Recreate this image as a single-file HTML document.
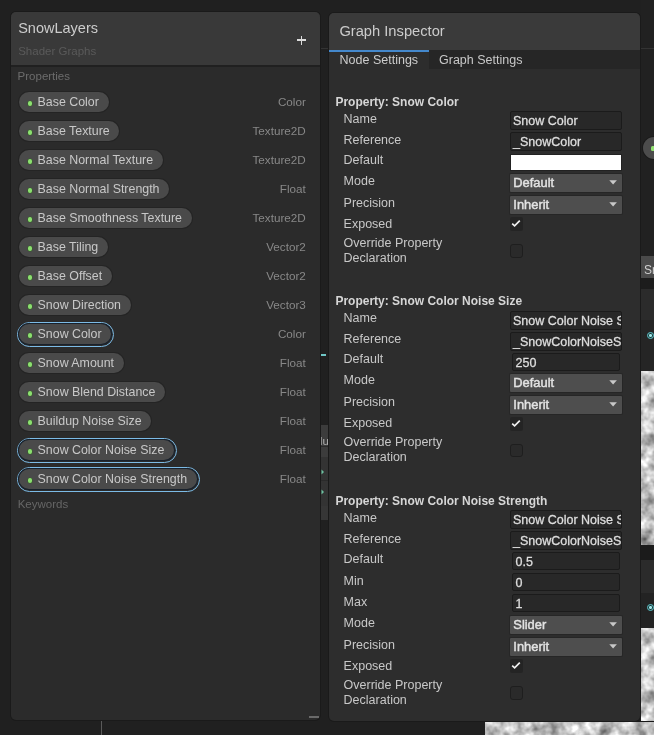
<!DOCTYPE html>
<html><head><meta charset="utf-8"><style>
html,body{margin:0;padding:0;}
body{width:654px;height:735px;overflow:hidden;position:relative;background:#202020;font-family:"Liberation Sans", sans-serif;}
#root{position:absolute;left:0;top:0;width:654px;height:735px;will-change:transform;}
.b{position:absolute;}
.t{position:absolute;white-space:nowrap;line-height:1;}
</style></head><body>
<svg width="0" height="0" style="position:absolute"><defs>
<filter id="noise" x="0" y="0" width="1" height="1" filterUnits="objectBoundingBox" color-interpolation-filters="sRGB">
<feTurbulence type="fractalNoise" baseFrequency="0.08" numOctaves="3" seed="7"/>
<feColorMatrix type="matrix" values="0.95 0 0 0 0.27  0.95 0 0 0 0.27  0.95 0 0 0 0.27  0 0 0 0 1"/>
</filter></defs></svg>
<div id="root"><div class="b" style="left:641px;top:0px;width:13px;height:735px;background:#212121;"></div><div class="b" style="left:641px;top:47.5px;width:13px;height:1px;background:#333333;"></div><div class="b" style="left:320px;top:47.5px;width:9px;height:1px;background:#333333;"></div><div class="b" style="left:643px;top:137px;width:24px;height:22px;background:#4c4c4c;border-radius:11px;box-shadow:0 0 0 1px #1a1a1a;"></div><div class="b" style="left:650.5px;top:146px;width:6px;height:5px;background:#90e070;border-radius:1.5px;"></div><div class="b" style="left:641px;top:255.5px;width:13px;height:22.5px;background:#4a4a4a;"></div><div class="t" style="left:644px;top:263.74px;font-size:12px;color:#d0d0d0;">Sn</div><div class="b" style="left:641px;top:278px;width:13px;height:11px;background:#1c1c1c;"></div><div class="b" style="left:641px;top:289px;width:13px;height:31px;background:#2b2b2b;"></div><div class="b" style="left:641px;top:320px;width:13px;height:51px;background:#252525;"></div><div class="b" style="left:646.5px;top:332px;width:7px;height:7px;border:1.5px solid #5cc6cc;border-radius:50%;box-sizing:border-box;background:radial-gradient(circle,#9fe8ea 0 1.3px,#203838 1.6px);"></div><svg class="b" style="left:641px;top:371px" width="13" height="174"><rect width="13" height="174" filter="url(#noise)"/></svg><div class="b" style="left:641px;top:545px;width:13px;height:15px;background:#1b1b1b;"></div><div class="b" style="left:641px;top:560px;width:13px;height:33px;background:#2b2b2b;"></div><div class="b" style="left:641px;top:593px;width:13px;height:34.5px;background:#232323;"></div><div class="b" style="left:646.5px;top:604px;width:7px;height:7px;border:1.5px solid #5cc6cc;border-radius:50%;box-sizing:border-box;background:radial-gradient(circle,#9fe8ea 0 1.3px,#203838 1.6px);"></div><svg class="b" style="left:641px;top:627.5px" width="13" height="108"><rect width="13" height="108" filter="url(#noise)"/></svg><svg class="b" style="left:485px;top:722px" width="169" height="13"><rect width="169" height="13" filter="url(#noise)"/></svg><div class="b" style="left:485px;top:721px;width:169px;height:1px;background:#181818;"></div><div class="b" style="left:100.5px;top:720px;width:1px;height:15px;background:#5a5a5a;"></div><div class="b" style="left:320px;top:354px;width:6px;height:1.5px;background:#6fc6c6;"></div><div class="b" style="left:320px;top:425px;width:9px;height:32px;background:#3c3c3c;"></div><div class="b" style="left:320px;top:457px;width:9px;height:49px;background:#333333;"></div><div class="b" style="left:320px;top:506px;width:9px;height:14px;background:#363636;"></div><div class="b" style="left:320px;top:446px;width:9px;height:0.8px;background:#2a2a2a;"></div><div class="b" style="left:320px;top:480px;width:9px;height:0.8px;background:#2a2a2a;"></div><div class="t" style="left:313px;top:435.67px;font-size:11.5px;color:#b0b0b0;">Mu</div><svg class="b" style="left:320.5px;top:469px" width="4" height="6"><path d="M0.5 0.5 L3 3 L0.5 5.5Z" fill="#6cc0a0"/></svg><svg class="b" style="left:320.5px;top:489px" width="4" height="6"><path d="M0.5 0.5 L3 3 L0.5 5.5Z" fill="#6cc0a0"/></svg><div class="b" style="left:10px;top:11px;width:311px;height:710px;background:#1a1a1a;border-radius:6px;"></div><div class="b" style="left:11px;top:12px;width:309px;height:708px;background:#2b2b2b;border-radius:5px;overflow:hidden;"><div class="b" style="left:0;top:0;width:309px;height:53px;background:#393939;"></div><div class="b" style="left:0;top:53px;width:309px;height:1.5px;background:#202020;"></div></div><div class="t" style="left:18.2px;top:21.03px;font-size:14.5px;color:#cccccc;">SnowLayers</div><div class="t" style="left:18.2px;top:45.57px;font-size:11.5px;color:#5a5a5a;">Shader Graphs</div><div class="b" style="left:296.8px;top:39.4px;width:9.5px;height:1.5px;background:#dcdcdc;"></div><div class="b" style="left:300.8px;top:35.5px;width:1.5px;height:9.5px;background:#dcdcdc;"></div><div class="t" style="left:17.6px;top:70.97px;font-size:11.5px;color:#6c6c6c;">Properties</div><div class="b" style="left:19.2px;top:92px;width:89.396875px;height:20px;background:#4a4a4a;border-radius:10px;box-shadow:0 0 0 1px #242424;"></div><div class="b" style="left:27.5px;top:101px;width:4.5px;height:4.5px;background:#8ce070;border-radius:50%;box-shadow:0 0 0 0.6px #3a5a30;"></div><div class="t" style="left:37.6px;top:96.40px;font-size:12.4px;color:#c8c8c8;">Base Color</div><div class="t" style="right:348.2px;top:96.10px;font-size:11.7px;color:#888888;">Color</div><div class="b" style="left:19.2px;top:121px;width:100.19375px;height:20px;background:#4a4a4a;border-radius:10px;box-shadow:0 0 0 1px #242424;"></div><div class="b" style="left:27.5px;top:130px;width:4.5px;height:4.5px;background:#8ce070;border-radius:50%;box-shadow:0 0 0 0.6px #3a5a30;"></div><div class="t" style="left:37.6px;top:125.40px;font-size:12.4px;color:#c8c8c8;">Base Texture</div><div class="t" style="right:348.2px;top:125.10px;font-size:11.7px;color:#888888;">Texture2D</div><div class="b" style="left:19.2px;top:150px;width:143.56875000000002px;height:20px;background:#4a4a4a;border-radius:10px;box-shadow:0 0 0 1px #242424;"></div><div class="b" style="left:27.5px;top:159px;width:4.5px;height:4.5px;background:#8ce070;border-radius:50%;box-shadow:0 0 0 0.6px #3a5a30;"></div><div class="t" style="left:37.6px;top:154.40px;font-size:12.4px;color:#c8c8c8;">Base Normal Texture</div><div class="t" style="right:348.2px;top:154.10px;font-size:11.7px;color:#888888;">Texture2D</div><div class="b" style="left:19.2px;top:179px;width:149.99062500000002px;height:20px;background:#4a4a4a;border-radius:10px;box-shadow:0 0 0 1px #242424;"></div><div class="b" style="left:27.5px;top:188px;width:4.5px;height:4.5px;background:#8ce070;border-radius:50%;box-shadow:0 0 0 0.6px #3a5a30;"></div><div class="t" style="left:37.6px;top:183.40px;font-size:12.4px;color:#c8c8c8;">Base Normal Strength</div><div class="t" style="right:348.2px;top:183.10px;font-size:11.7px;color:#888888;">Float</div><div class="b" style="left:19.2px;top:208px;width:172.52187500000002px;height:20px;background:#4a4a4a;border-radius:10px;box-shadow:0 0 0 1px #242424;"></div><div class="b" style="left:27.5px;top:217px;width:4.5px;height:4.5px;background:#8ce070;border-radius:50%;box-shadow:0 0 0 0.6px #3a5a30;"></div><div class="t" style="left:37.6px;top:212.40px;font-size:12.4px;color:#c8c8c8;">Base Smoothness Texture</div><div class="t" style="right:348.2px;top:212.10px;font-size:11.7px;color:#888888;">Texture2D</div><div class="b" style="left:19.2px;top:237px;width:88.709375px;height:20px;background:#4a4a4a;border-radius:10px;box-shadow:0 0 0 1px #242424;"></div><div class="b" style="left:27.5px;top:246px;width:4.5px;height:4.5px;background:#8ce070;border-radius:50%;box-shadow:0 0 0 0.6px #3a5a30;"></div><div class="t" style="left:37.6px;top:241.40px;font-size:12.4px;color:#c8c8c8;">Base Tiling</div><div class="t" style="right:348.2px;top:241.10px;font-size:11.7px;color:#888888;">Vector2</div><div class="b" style="left:19.2px;top:266px;width:92.615625px;height:20px;background:#4a4a4a;border-radius:10px;box-shadow:0 0 0 1px #242424;"></div><div class="b" style="left:27.5px;top:275px;width:4.5px;height:4.5px;background:#8ce070;border-radius:50%;box-shadow:0 0 0 0.6px #3a5a30;"></div><div class="t" style="left:37.6px;top:270.40px;font-size:12.4px;color:#c8c8c8;">Base Offset</div><div class="t" style="right:348.2px;top:270.10px;font-size:11.7px;color:#888888;">Vector2</div><div class="b" style="left:19.2px;top:295px;width:111.428125px;height:20px;background:#4a4a4a;border-radius:10px;box-shadow:0 0 0 1px #242424;"></div><div class="b" style="left:27.5px;top:304px;width:4.5px;height:4.5px;background:#8ce070;border-radius:50%;box-shadow:0 0 0 0.6px #3a5a30;"></div><div class="t" style="left:37.6px;top:299.40px;font-size:12.4px;color:#c8c8c8;">Snow Direction</div><div class="t" style="right:348.2px;top:299.10px;font-size:11.7px;color:#888888;">Vector3</div><div class="b" style="left:17px;top:321.7px;width:97.146875px;height:25.2px;border:1.5px solid #7cbbe6;border-radius:12.4px;box-sizing:border-box;"></div><div class="b" style="left:19.2px;top:324px;width:92.146875px;height:20px;background:#4a4a4a;border-radius:10px;box-shadow:0 0 0 1px #18212c;"></div><div class="b" style="left:27.5px;top:333px;width:4.5px;height:4.5px;background:#8ce070;border-radius:50%;box-shadow:0 0 0 0.6px #3a5a30;"></div><div class="t" style="left:37.6px;top:328.40px;font-size:12.4px;color:#c8c8c8;">Snow Color</div><div class="t" style="right:348.2px;top:328.10px;font-size:11.7px;color:#888888;">Color</div><div class="b" style="left:19.2px;top:353px;width:104.553125px;height:20px;background:#4a4a4a;border-radius:10px;box-shadow:0 0 0 1px #242424;"></div><div class="b" style="left:27.5px;top:362px;width:4.5px;height:4.5px;background:#8ce070;border-radius:50%;box-shadow:0 0 0 0.6px #3a5a30;"></div><div class="t" style="left:37.6px;top:357.40px;font-size:12.4px;color:#c8c8c8;">Snow Amount</div><div class="t" style="right:348.2px;top:357.10px;font-size:11.7px;color:#888888;">Float</div><div class="b" style="left:19.2px;top:382px;width:145.88125000000002px;height:20px;background:#4a4a4a;border-radius:10px;box-shadow:0 0 0 1px #242424;"></div><div class="b" style="left:27.5px;top:391px;width:4.5px;height:4.5px;background:#8ce070;border-radius:50%;box-shadow:0 0 0 0.6px #3a5a30;"></div><div class="t" style="left:37.6px;top:386.40px;font-size:12.4px;color:#c8c8c8;">Snow Blend Distance</div><div class="t" style="right:348.2px;top:386.10px;font-size:11.7px;color:#888888;">Float</div><div class="b" style="left:19.2px;top:411px;width:132.1px;height:20px;background:#4a4a4a;border-radius:10px;box-shadow:0 0 0 1px #242424;"></div><div class="b" style="left:27.5px;top:420px;width:4.5px;height:4.5px;background:#8ce070;border-radius:50%;box-shadow:0 0 0 0.6px #3a5a30;"></div><div class="t" style="left:37.6px;top:415.40px;font-size:12.4px;color:#c8c8c8;">Buildup Noise Size</div><div class="t" style="right:348.2px;top:415.10px;font-size:11.7px;color:#888888;">Float</div><div class="b" style="left:17px;top:437.7px;width:159.81875000000002px;height:25.2px;border:1.5px solid #7cbbe6;border-radius:12.4px;box-sizing:border-box;"></div><div class="b" style="left:19.2px;top:440px;width:154.81875000000002px;height:20px;background:#4a4a4a;border-radius:10px;box-shadow:0 0 0 1px #18212c;"></div><div class="b" style="left:27.5px;top:449px;width:4.5px;height:4.5px;background:#8ce070;border-radius:50%;box-shadow:0 0 0 0.6px #3a5a30;"></div><div class="t" style="left:37.6px;top:444.40px;font-size:12.4px;color:#c8c8c8;">Snow Color Noise Size</div><div class="t" style="right:348.2px;top:444.10px;font-size:11.7px;color:#888888;">Float</div><div class="b" style="left:17px;top:466.7px;width:182.53750000000002px;height:25.2px;border:1.5px solid #7cbbe6;border-radius:12.4px;box-sizing:border-box;"></div><div class="b" style="left:19.2px;top:469px;width:177.53750000000002px;height:20px;background:#4a4a4a;border-radius:10px;box-shadow:0 0 0 1px #18212c;"></div><div class="b" style="left:27.5px;top:478px;width:4.5px;height:4.5px;background:#8ce070;border-radius:50%;box-shadow:0 0 0 0.6px #3a5a30;"></div><div class="t" style="left:37.6px;top:473.40px;font-size:12.4px;color:#c8c8c8;">Snow Color Noise Strength</div><div class="t" style="right:348.2px;top:473.10px;font-size:11.7px;color:#888888;">Float</div><div class="t" style="left:17.7px;top:499.17px;font-size:11.5px;color:#666666;">Keywords</div><div class="b" style="left:309px;top:716px;width:10px;height:2px;background:#6a6a6a;"></div><div class="b" style="left:328px;top:12px;width:313px;height:710px;background:#1a1a1a;border-radius:6px;"></div><div class="b" style="left:329px;top:13px;width:311px;height:708px;background:#2d2d2d;border-radius:5px;overflow:hidden;"><div class="b" style="left:0;top:0;width:311px;height:37px;background:#3a3a3a;"></div><div class="b" style="left:100px;top:37px;width:211px;height:18.5px;background:#262626;"></div><div class="b" style="left:0;top:37px;width:100px;height:1.5px;background:#4488cc;"></div></div><div class="t" style="left:339.4px;top:24.46px;font-size:14.7px;color:#cccccc;">Graph Inspector</div><div class="t" style="left:339.6px;top:54.02px;font-size:12.5px;color:#cccccc;">Node Settings</div><div class="t" style="left:439px;top:54.02px;font-size:12.5px;color:#c8c8c8;">Graph Settings</div><div class="t" style="left:335.4px;top:96.24px;font-size:12px;color:#d6d6d6;font-weight:bold;">Property: Snow Color</div><div class="t" style="left:343.6px;top:113.32px;font-size:12.5px;color:#c8c8c8;">Name</div><div class="b" style="left:510px;top:111px;width:112px;height:19px;background:#282828;border:1px solid #1b1b1b;box-sizing:border-box;border-radius:2px;overflow:hidden;"><div class="t" style="left:2px;top:2.92px;font-size:12.5px;-webkit-text-stroke:0.3px #dedede;color:#dedede;white-space:nowrap;">Snow Color</div></div><div class="t" style="left:343.6px;top:134.32px;font-size:12.5px;color:#c8c8c8;">Reference</div><div class="b" style="left:510px;top:132px;width:112px;height:19px;background:#282828;border:1px solid #1b1b1b;box-sizing:border-box;border-radius:2px;overflow:hidden;"><div class="t" style="left:2px;top:2.92px;font-size:12.5px;-webkit-text-stroke:0.3px #dedede;color:#dedede;white-space:nowrap;">_SnowColor</div></div><div class="t" style="left:343.6px;top:153.72px;font-size:12.5px;color:#c8c8c8;">Default</div><div class="b" style="left:510px;top:153.5px;width:112px;height:17px;background:#ffffff;border:1px solid #222;box-sizing:border-box;"></div><div class="t" style="left:343.6px;top:175.32px;font-size:12.5px;color:#c8c8c8;">Mode</div><div class="b" style="left:510px;top:174px;width:112px;height:18px;background:#4e4e4e;border-radius:1px;box-shadow:0 0 0 1px #262626;"></div><div class="t" style="left:513.3px;top:176.88px;font-size:12.9px;color:#e2e2e2;-webkit-text-stroke:0.45px #e2e2e2;">Default</div><svg class="b" style="left:608.5px;top:180px" width="9" height="6"><path d="M0.3 0.3 L7.9 0.3 L4.1 4.6 Z" fill="#c8c8c8"/></svg><div class="t" style="left:343.6px;top:197.32px;font-size:12.5px;color:#c8c8c8;">Precision</div><div class="b" style="left:510px;top:196px;width:112px;height:18px;background:#4e4e4e;border-radius:1px;box-shadow:0 0 0 1px #262626;"></div><div class="t" style="left:513.3px;top:198.88px;font-size:12.9px;color:#e2e2e2;-webkit-text-stroke:0.45px #e2e2e2;">Inherit</div><svg class="b" style="left:608.5px;top:202px" width="9" height="6"><path d="M0.3 0.3 L7.9 0.3 L4.1 4.6 Z" fill="#c8c8c8"/></svg><div class="t" style="left:343.6px;top:218.32px;font-size:12.5px;color:#c8c8c8;">Exposed</div><div class="b" style="left:510px;top:217px;width:12.5px;height:14px;background:#242424;border-radius:2px;"></div><svg class="b" style="left:510px;top:217px" width="13" height="13"><path d="M2.2 6.6 L4.6 8.8 L9.8 3.6" stroke="#efefef" stroke-width="1.7" fill="none"/></svg><div class="t" style="left:343.6px;top:236.82px;font-size:12.5px;color:#c8c8c8;">Override Property</div><div class="t" style="left:343.6px;top:251.82px;font-size:12.5px;color:#c8c8c8;">Declaration</div><div class="b" style="left:509.5px;top:244px;width:13px;height:13.5px;background:#2a2a2a;border:1px solid #1e1e1e;box-sizing:border-box;border-radius:3px;"></div><div class="t" style="left:335.4px;top:295.24px;font-size:12px;color:#d6d6d6;font-weight:bold;">Property: Snow Color Noise Size</div><div class="t" style="left:343.6px;top:312.32px;font-size:12.5px;color:#c8c8c8;">Name</div><div class="b" style="left:510px;top:310.8px;width:112px;height:19px;background:#282828;border:1px solid #1b1b1b;box-sizing:border-box;border-radius:2px;overflow:hidden;"><div class="t" style="left:2px;top:2.92px;font-size:12.5px;-webkit-text-stroke:0.3px #dedede;color:#dedede;white-space:nowrap;">Snow Color Noise Size</div></div><div class="t" style="left:343.6px;top:333.32px;font-size:12.5px;color:#c8c8c8;">Reference</div><div class="b" style="left:510px;top:331.8px;width:112px;height:19px;background:#282828;border:1px solid #1b1b1b;box-sizing:border-box;border-radius:2px;overflow:hidden;"><div class="t" style="left:2px;top:2.92px;font-size:12.5px;-webkit-text-stroke:0.3px #dedede;color:#dedede;white-space:nowrap;">_SnowColorNoiseSize</div></div><div class="t" style="left:343.6px;top:352.72px;font-size:12.5px;color:#c8c8c8;">Default</div><div class="b" style="left:511.5px;top:352.8px;width:108.5px;height:18px;background:#282828;border:1px solid #1b1b1b;box-sizing:border-box;border-radius:2px;overflow:hidden;"><div class="t" style="left:3px;top:2.92px;font-size:12.5px;-webkit-text-stroke:0.3px #dedede;color:#dedede;white-space:nowrap;">250</div></div><div class="t" style="left:343.6px;top:374.32px;font-size:12.5px;color:#c8c8c8;">Mode</div><div class="b" style="left:510px;top:373.8px;width:112px;height:18px;background:#4e4e4e;border-radius:1px;box-shadow:0 0 0 1px #262626;"></div><div class="t" style="left:513.3px;top:376.68px;font-size:12.9px;color:#e2e2e2;-webkit-text-stroke:0.45px #e2e2e2;">Default</div><svg class="b" style="left:608.5px;top:379.8px" width="9" height="6"><path d="M0.3 0.3 L7.9 0.3 L4.1 4.6 Z" fill="#c8c8c8"/></svg><div class="t" style="left:343.6px;top:396.32px;font-size:12.5px;color:#c8c8c8;">Precision</div><div class="b" style="left:510px;top:395.8px;width:112px;height:18px;background:#4e4e4e;border-radius:1px;box-shadow:0 0 0 1px #262626;"></div><div class="t" style="left:513.3px;top:398.68px;font-size:12.9px;color:#e2e2e2;-webkit-text-stroke:0.45px #e2e2e2;">Inherit</div><svg class="b" style="left:608.5px;top:401.8px" width="9" height="6"><path d="M0.3 0.3 L7.9 0.3 L4.1 4.6 Z" fill="#c8c8c8"/></svg><div class="t" style="left:343.6px;top:417.32px;font-size:12.5px;color:#c8c8c8;">Exposed</div><div class="b" style="left:510px;top:416.8px;width:12.5px;height:14px;background:#242424;border-radius:2px;"></div><svg class="b" style="left:510px;top:416.8px" width="13" height="13"><path d="M2.2 6.6 L4.6 8.8 L9.8 3.6" stroke="#efefef" stroke-width="1.7" fill="none"/></svg><div class="t" style="left:343.6px;top:435.82px;font-size:12.5px;color:#c8c8c8;">Override Property</div><div class="t" style="left:343.6px;top:450.82px;font-size:12.5px;color:#c8c8c8;">Declaration</div><div class="b" style="left:509.5px;top:443.8px;width:13px;height:13.5px;background:#2a2a2a;border:1px solid #1e1e1e;box-sizing:border-box;border-radius:3px;"></div><div class="t" style="left:335.4px;top:495.24px;font-size:12px;color:#d6d6d6;font-weight:bold;">Property: Snow Color Noise Strength</div><div class="t" style="left:343.6px;top:512.32px;font-size:12.5px;color:#c8c8c8;">Name</div><div class="b" style="left:510px;top:510px;width:112px;height:19px;background:#282828;border:1px solid #1b1b1b;box-sizing:border-box;border-radius:2px;overflow:hidden;"><div class="t" style="left:2px;top:2.92px;font-size:12.5px;-webkit-text-stroke:0.3px #dedede;color:#dedede;white-space:nowrap;">Snow Color Noise Strength</div></div><div class="t" style="left:343.6px;top:533.32px;font-size:12.5px;color:#c8c8c8;">Reference</div><div class="b" style="left:510px;top:531px;width:112px;height:19px;background:#282828;border:1px solid #1b1b1b;box-sizing:border-box;border-radius:2px;overflow:hidden;"><div class="t" style="left:2px;top:2.92px;font-size:12.5px;-webkit-text-stroke:0.3px #dedede;color:#dedede;white-space:nowrap;">_SnowColorNoiseStrength</div></div><div class="t" style="left:343.6px;top:552.72px;font-size:12.5px;color:#c8c8c8;">Default</div><div class="b" style="left:511.5px;top:552px;width:108.5px;height:18px;background:#282828;border:1px solid #1b1b1b;box-sizing:border-box;border-radius:2px;overflow:hidden;"><div class="t" style="left:3px;top:2.92px;font-size:12.5px;-webkit-text-stroke:0.3px #dedede;color:#dedede;white-space:nowrap;">0.5</div></div><div class="t" style="left:343.6px;top:574.52px;font-size:12.5px;color:#c8c8c8;">Min</div><div class="b" style="left:511.5px;top:573px;width:108.5px;height:18px;background:#282828;border:1px solid #1b1b1b;box-sizing:border-box;border-radius:2px;overflow:hidden;"><div class="t" style="left:3px;top:2.92px;font-size:12.5px;-webkit-text-stroke:0.3px #dedede;color:#dedede;white-space:nowrap;">0</div></div><div class="t" style="left:343.6px;top:595.52px;font-size:12.5px;color:#c8c8c8;">Max</div><div class="b" style="left:511.5px;top:594px;width:108.5px;height:18px;background:#282828;border:1px solid #1b1b1b;box-sizing:border-box;border-radius:2px;overflow:hidden;"><div class="t" style="left:3px;top:2.92px;font-size:12.5px;-webkit-text-stroke:0.3px #dedede;color:#dedede;white-space:nowrap;">1</div></div><div class="t" style="left:343.6px;top:617.32px;font-size:12.5px;color:#c8c8c8;">Mode</div><div class="b" style="left:510px;top:616px;width:112px;height:18px;background:#4e4e4e;border-radius:1px;box-shadow:0 0 0 1px #262626;"></div><div class="t" style="left:513.3px;top:618.88px;font-size:12.9px;color:#e2e2e2;-webkit-text-stroke:0.45px #e2e2e2;">Slider</div><svg class="b" style="left:608.5px;top:622px" width="9" height="6"><path d="M0.3 0.3 L7.9 0.3 L4.1 4.6 Z" fill="#c8c8c8"/></svg><div class="t" style="left:343.6px;top:639.32px;font-size:12.5px;color:#c8c8c8;">Precision</div><div class="b" style="left:510px;top:638px;width:112px;height:18px;background:#4e4e4e;border-radius:1px;box-shadow:0 0 0 1px #262626;"></div><div class="t" style="left:513.3px;top:640.88px;font-size:12.9px;color:#e2e2e2;-webkit-text-stroke:0.45px #e2e2e2;">Inherit</div><svg class="b" style="left:608.5px;top:644px" width="9" height="6"><path d="M0.3 0.3 L7.9 0.3 L4.1 4.6 Z" fill="#c8c8c8"/></svg><div class="t" style="left:343.6px;top:660.32px;font-size:12.5px;color:#c8c8c8;">Exposed</div><div class="b" style="left:510px;top:659px;width:12.5px;height:14px;background:#242424;border-radius:2px;"></div><svg class="b" style="left:510px;top:659px" width="13" height="13"><path d="M2.2 6.6 L4.6 8.8 L9.8 3.6" stroke="#efefef" stroke-width="1.7" fill="none"/></svg><div class="t" style="left:343.6px;top:678.82px;font-size:12.5px;color:#c8c8c8;">Override Property</div><div class="t" style="left:343.6px;top:693.82px;font-size:12.5px;color:#c8c8c8;">Declaration</div><div class="b" style="left:509.5px;top:686px;width:13px;height:13.5px;background:#2a2a2a;border:1px solid #1e1e1e;box-sizing:border-box;border-radius:3px;"></div></div>
</body></html>
